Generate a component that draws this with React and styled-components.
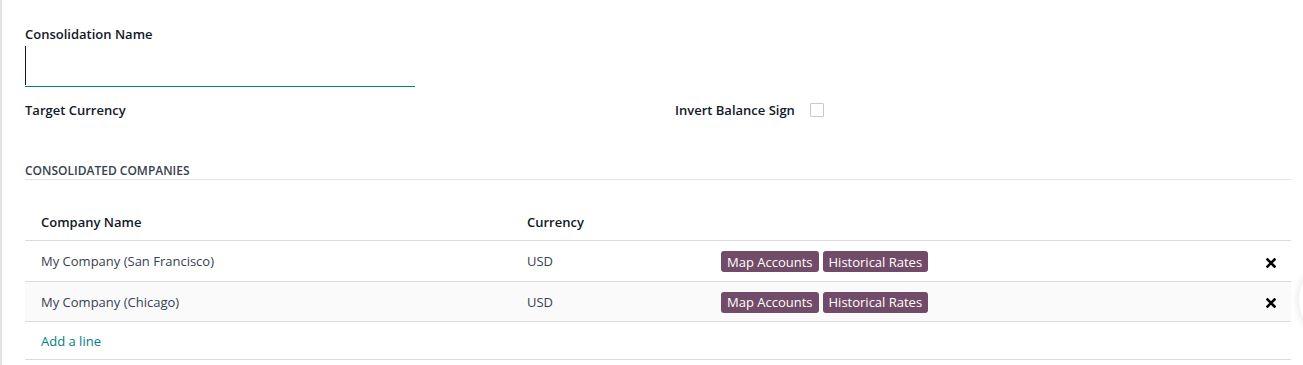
import React from 'react';
import styled, { createGlobalStyle } from 'styled-components';

const GlobalStyle = createGlobalStyle`
  html, body {
    margin: 0;
    padding: 0;
    background: #ffffff;
  }
  body {
    font-family: "Open Sans", "Noto Sans", "Liberation Sans", sans-serif;
    font-size: 13px;
    color: #212529;
    overflow: hidden;
  }
`;

const Sheet = styled.div`
  position: relative;
  width: 1303px;
  height: 365px;
  box-sizing: border-box;
  border-left: 2px solid #e3e3e3;
  padding: 24px 12px 0 23px;
`;

const FieldGrid = styled.div`
  display: grid;
  grid-template-columns: 650px 1fr;
  align-items: center;
`;

const Label = styled.div`
  font-weight: 600;
  color: #111827;
  line-height: 20px;
  display: flex;
  align-items: center;
  gap: 15px;
`;

const NameInput = styled.div`
  position: relative;
  width: 390px;
  height: 41px;
  margin-top: 1px;
  border-bottom: 1px solid #017e84;
  &::before {
    content: '';
    position: absolute;
    left: 0;
    top: 1px;
    bottom: 1px;
    width: 1px;
    background: #111827;
  }
`;

const CurrencyRow = styled(FieldGrid)`
  margin-top: 13px;
`;

const Checkbox = styled.span`
  display: inline-block;
  width: 12px;
  height: 12px;
  border: 1px solid #c9c9c9;
  border-radius: 1px;
  background: #fff;
`;

const SectionTitle = styled.div`
  margin-top: 42px;
  font-size: 12px;
  font-weight: 600;
  color: #374151;
  line-height: 17px;
  border-bottom: 1px solid #e2e2e2;
`;

const Table = styled.table`
  margin-top: 20px;
  width: 100%;
  border-collapse: collapse;
`;

const Th = styled.th`
  text-align: left;
  font-weight: 600;
  color: #111827;
  height: 37px;
  padding: 3px 16px 0;
  border-bottom: 1px solid #dcdcdc;
`;

const Tr = styled.tr`
  background: ${(p) => (p.$striped ? '#fafafa' : '#ffffff')};
`;

const Td = styled.td`
  height: ${(p) => p.$h || 39}px;
  padding: 0 16px;
  color: #374151;
  border-bottom: 1px solid #dcdcdc;
  white-space: nowrap;
  text-align: ${(p) => (p.$right ? 'right' : 'left')};
`;

const Badges = styled.div`
  display: flex;
  gap: 4px;
  padding-top: 1px;
`;

const Badge = styled.span`
  display: inline-flex;
  align-items: center;
  height: 21px;
  padding: 0 6px;
  background: #714b67;
  color: #ffffff;
  border-radius: 3px;
  font-size: 13px;
`;

const AddLine = styled.a`
  color: #017e84;
  text-decoration: none;
  cursor: pointer;
`;

const DeleteIcon = styled.svg`
  display: inline-block;
  vertical-align: middle;
  margin-right: -1px;
`;

const FloatingEdge = styled.div`
  position: absolute;
  right: -30px;
  top: 272px;
  width: 34px;
  height: 56px;
  border-radius: 50%;
  background: #ffffff;
  box-shadow: 0 0 10px rgba(0, 0, 0, 0.12);
`;

function Cross() {
  return (
    <DeleteIcon width="10" height="10" viewBox="0 0 10 10">
      <path d="M1.5 1.5 L8.5 8.5 M8.5 1.5 L1.5 8.5" stroke="#000" strokeWidth="2.6" strokeLinecap="square" />
    </DeleteIcon>
  );
}

const companies = [
  { name: 'My Company (San Francisco)', currency: 'USD', height: 40 },
  { name: 'My Company (Chicago)', currency: 'USD', height: 39 },
];

export default function App() {
  return (
    <>
      <GlobalStyle />
      <Sheet>
        <Label>Consolidation Name</Label>
        <NameInput />
        <CurrencyRow>
          <Label>Target Currency</Label>
          <Label>
            Invert Balance Sign
            <Checkbox />
          </Label>
        </CurrencyRow>
        <SectionTitle>CONSOLIDATED COMPANIES</SectionTitle>
        <Table>
          <colgroup>
            <col style={{ width: 486 }} />
            <col style={{ width: 194 }} />
            <col />
            <col style={{ width: 40 }} />
          </colgroup>
          <thead>
            <tr>
              <Th>Company Name</Th>
              <Th>Currency</Th>
              <Th />
              <Th />
            </tr>
          </thead>
          <tbody>
            {companies.map((c, i) => (
              <Tr key={c.name} $striped={i % 2 === 1}>
                <Td $h={c.height}>{c.name}</Td>
                <Td $h={c.height}>{c.currency}</Td>
                <Td $h={c.height}>
                  <Badges>
                    <Badge>Map Accounts</Badge>
                    <Badge>Historical Rates</Badge>
                  </Badges>
                </Td>
                <Td $h={c.height} $right>
                  <Cross />
                </Td>
              </Tr>
            ))}
            <Tr>
              <Td $h={37}>
                <AddLine>Add a line</AddLine>
              </Td>
              <Td $h={37} />
              <Td $h={37} />
              <Td $h={37} />
            </Tr>
          </tbody>
        </Table>
        <FloatingEdge />
      </Sheet>
    </>
  );
}
